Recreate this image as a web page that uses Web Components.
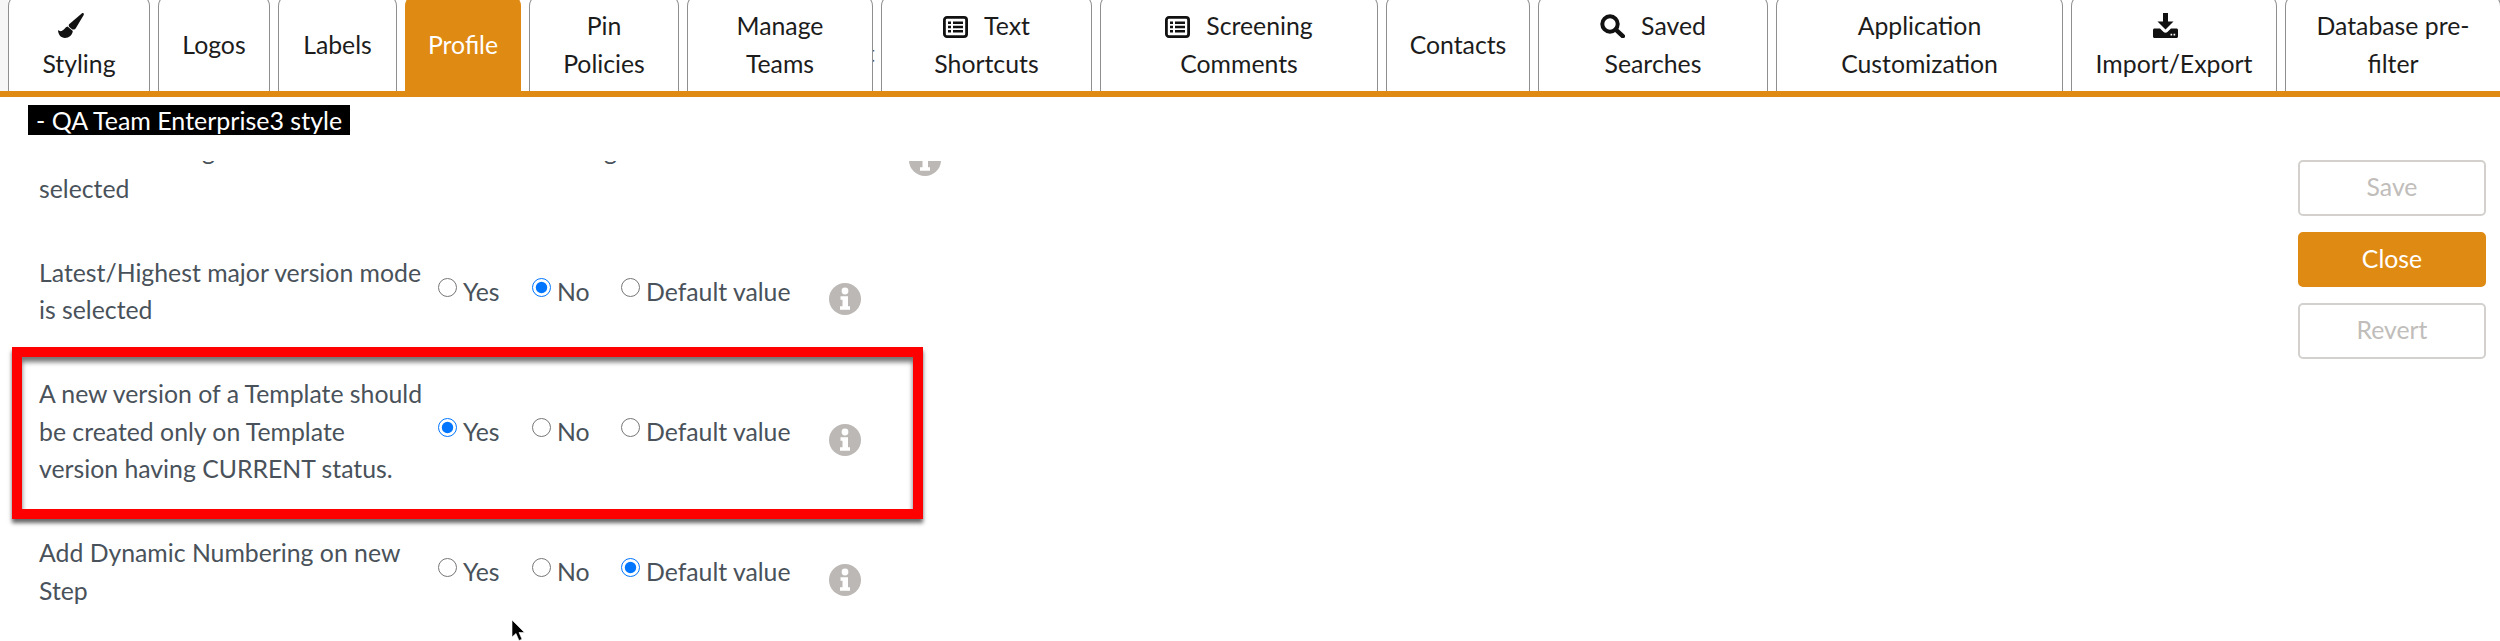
<!DOCTYPE html>
<html lang="en">
<head>
<meta charset="utf-8">
<title>Profile</title>
<style>
  html, body { margin: 0; height: 100%; background: #fff; overflow: hidden; }
  body { font-family: Lato, "Liberation Sans", sans-serif; }
</style>
</head>
<body>
<settings-page>
  <tab-bar slot="tabs">
    <nav-tab width="142"><ui-icon name="brush" block></ui-icon>Styling</nav-tab>
    <nav-tab width="112">Logos</nav-tab>
    <nav-tab width="119">Labels</nav-tab>
    <nav-tab width="116" active>Profile</nav-tab>
    <nav-tab width="150">Pin<br>Policies</nav-tab>
    <nav-tab width="186">Manage<br>Teams</nav-tab>
    <nav-tab width="211"><ui-icon name="list"></ui-icon>Text<br>Shortcuts</nav-tab>
    <nav-tab width="278"><ui-icon name="list"></ui-icon>Screening<br>Comments</nav-tab>
    <nav-tab width="144">Contacts</nav-tab>
    <nav-tab width="230"><ui-icon name="search"></ui-icon>Saved<br>Searches</nav-tab>
    <nav-tab width="287">Application<br>Customization</nav-tab>
    <nav-tab width="206"><ui-icon name="download" block></ui-icon>Import/Export</nav-tab>
    <nav-tab width="216">Database pre-<br>filter</nav-tab>
  </tab-bar>

  <span slot="badge">- QA Team Enterprise3 style</span>

  <pref-row wide>Latest minor tag and the latest draft version while tag<br>selected</pref-row>
  <pref-row group="major" value="no">Latest/Highest major version mode<br>is selected</pref-row>
  <pref-row group="current" value="yes" marked>A new version of a Template should<br>be created only on Template<br>version having CURRENT status.</pref-row>
  <pref-row group="numbering" value="default">Add Dynamic Numbering on new<br>Step</pref-row>

  <action-button slot="actions" disabled>Save</action-button>
  <action-button slot="actions" primary>Close</action-button>
  <action-button slot="actions" disabled>Revert</action-button>
</settings-page>

<script>
const ORANGE = '#df8a13';

const ICONS = {
  brush: {
    w: 26, h: 25,
    body: `<path fill="#111" d="M24 .3c1.2-.6 2.2.4 1.7 1.7L17.8 15.3c-.7 1.1-2 1.6-3.4 1.1l-2.2-1.6c-1.5-1.1-1.8-2.5-1.1-3.6z"/>
           <path fill="#111" d="M9.6 13.6l5.2 4.4C14.4 22 11 25 7 25c-4 0-7-3.6-7-8 1 .8 2.2 1.5 3.6 1.1 2.6-.7 3.4-3.9 6-4.5z"/>`
  },
  list: {
    w: 25, h: 22,
    body: `<rect x="1.4" y="1.4" width="22.2" height="19.2" rx="2.6" fill="none" stroke="#111" stroke-width="2.8"/>
           <path fill="#111" d="M5 5.4h3v2.6H5zM5 9.7h3v2.6H5zM5 14h3v2.6H5zM10 5.4h10v2.6H10zM10 9.7h10v2.6H10zM10 14h10v2.6H10z"/>`
  },
  search: {
    w: 25, h: 24,
    body: `<circle cx="10" cy="10" r="7.7" fill="none" stroke="#111" stroke-width="4"/>
           <path d="M15.8 15.6l7 6.6" fill="none" stroke="#111" stroke-width="4.4" stroke-linecap="round"/>`
  },
  download: {
    w: 25, h: 25,
    body: `<path fill="#111" d="M10 0h5v8.5h5.5L12.5 16.5 4.5 8.5H10z"/>
           <path fill="#111" fill-rule="evenodd" d="M1.5 15.5H7l3.6 3.6c1.1 1 2.7 1 3.8 0l3.6-3.6h5.5c.8 0 1.5.7 1.5 1.5v6.5c0 .8-.7 1.5-1.5 1.5h-22C.7 25 0 24.300 0 23.500V17c0-.8.7-1.500 1.500-1.500zM17.500 20.800h1.700v1.700h-1.700zM20.500 20.800h1.700v1.700h-1.700z"/>`
  }
};

class UiIcon extends HTMLElement {
  connectedCallback() {
    const icon = ICONS[this.getAttribute('name')];
    this.attachShadow({ mode: 'open' }).innerHTML = `
      <style>
        :host { display: inline-block; vertical-align: -3px; margin-right: 16px; line-height: 0; }
        /* icon on its own line keeps the trailing gap, so it sits left of centre */
        :host([block]) { display: block; margin: 0 0 1px; padding-right: 17px; height: 37px; vertical-align: baseline; }
        :host([block]) svg { margin-top: 6px; }
      </style>
      <svg width="${icon.w}" height="${icon.h}" viewBox="0 0 ${icon.w} ${icon.h}">${icon.body}</svg>`;
  }
}

class NavTab extends HTMLElement {
  connectedCallback() {
    this.style.width = this.getAttribute('width') + 'px';
    this.attachShadow({ mode: 'open' }).innerHTML = `
      <style>
        :host {
          display: flex;
          flex: none;
          box-sizing: border-box;
          flex-direction: column;
          justify-content: center;
          padding-top: 4px;
          background: #fff;
          border: 1px solid #8f8f8f;
          border-bottom: 0;
          border-radius: 12px 12px 0 0;
          text-align: center;
          position: relative;
          z-index: 1;
        }
        :host([active]) {
          background: ${ORANGE};
          border-color: ${ORANGE};
          color: #fff;
        }
      </style>
      <div><slot></slot></div>`;
  }
}

class TabBar extends HTMLElement {
  connectedCallback() {
    this.attachShadow({ mode: 'open' }).innerHTML = `
      <style>
        :host {
          display: block;
          height: 97px;
          overflow: hidden;
          box-sizing: border-box;
          border-bottom: 6px solid ${ORANGE};
          font-size: 24.800px;
          line-height: 38px;
          color: #1c1c1c;
        }
        .tabs {
          display: flex;
          gap: 8px;
          height: 97px;
          margin-top: -6px;
          border-left: 8px solid #f6f6f6;
          position: relative;
        }
        /* page text showing through the gap between two tabs */
        .behind {
          position: absolute;
          left: 858px;
          top: 40px;
          font-size: 24px;
          color: #555;
        }
      </style>
      <div class="tabs">
        <span class="behind">t</span>
        <slot></slot>
      </div>`;
  }
}

class InfoIcon extends HTMLElement {
  connectedCallback() {
    this.attachShadow({ mode: 'open' }).innerHTML = `
      <style>
        :host { display: block; width: 32px; height: 32px; line-height: 0; }
      </style>
      <svg width="32" height="32" viewBox="0 0 32 32">
        <circle cx="16" cy="16" r="16" fill="#bbb8b5"/>
        <circle cx="16" cy="8" r="3.400" fill="#fff"/>
        <path fill="#fff" d="M11.500 13.200h7.500v10h2v3.600H11v-3.600h2.500v-6.400h-2z"/>
      </svg>`;
  }
}

class PrefRow extends HTMLElement {
  connectedCallback() {
    const group = this.getAttribute('group');
    const value = this.getAttribute('value');
    const option = (val, label) => `
      <label>
        <input type="radio" name="${group}" value="${val}" ${val === value ? 'checked' : ''}>
        <span>${label}</span>
      </label>`;

    this.attachShadow({ mode: 'open' }).innerHTML = `
      <style>
        :host {
          display: flex;
          align-items: center;
          position: relative;
          padding: 23.250px 0 23.250px 39px;
          font-size: 24.800px;
          line-height: 37.500px;
          color: #49525a;
        }
        .label { width: 399px; flex: none; white-space: nowrap; }
        :host([wide]) .label { width: 870px; }
        :host([wide]) info-icon { align-self: flex-start; margin: 12px 0 0; }
        .options {
          display: grid;
          grid-template-columns: 94px 89px 208px;
          flex: none;
        }
        label { display: flex; align-items: flex-start; }
        input {
          width: 19px;
          height: 19px;
          margin: 5px 6px 0 0;
          flex: none;
        }
        info-icon { margin-top: 16px; }
        .mark {
          position: absolute;
          left: 12px;
          top: -5px;
          bottom: -8px;
          width: 911px;
          box-sizing: border-box;
          border: 10px solid #ff0000;
          box-shadow: 0 4px 4px rgba(0, 0, 0, .6), inset 0 5px 5px rgba(0, 0, 0, .55);
          pointer-events: none;
        }
      </style>
      <div class="label"><slot></slot></div>
      ${group ? `<div class="options">${option('yes', 'Yes')}${option('no', 'No')}${option('default', 'Default value')}</div>` : ''}
      <info-icon></info-icon>
      ${this.hasAttribute('marked') ? '<div class="mark"></div>' : ''}`;
  }
}

class ActionButton extends HTMLElement {
  connectedCallback() {
    this.attachShadow({ mode: 'open' }).innerHTML = `
      <style>
        :host {
          display: flex;
          align-items: center;
          justify-content: center;
          box-sizing: border-box;
          height: 56px;
          padding-bottom: 3px;
          border: 2px solid #d3d0cd;
          border-radius: 5px;
          font-size: 24.800px;
          color: #c0bdba;
          background: #fff;
        }
        :host([primary]) {
          height: 55px;
          background: ${ORANGE};
          border-color: ${ORANGE};
          color: #fff;
        }
      </style>
      <slot></slot>`;
  }
}

class SettingsPage extends HTMLElement {
  connectedCallback() {
    this.attachShadow({ mode: 'open' }).innerHTML = `
      <style>
        :host {
          display: flex;
          flex-direction: column;
          height: 641px;
          position: relative;
          overflow: hidden;
        }
        .main { display: flex; flex: 1; min-height: 0; }
        .left { flex: 1; display: flex; flex-direction: column; min-width: 0; }
        .badge-line { padding: 8px 0 0 28px; height: 64px; box-sizing: border-box; flex: none; }
        ::slotted([slot="badge"]) {
          display: inline-block;
          background: #000;
          color: #fff;
          font-size: 25px;
          line-height: 30px;
          padding: 0 8px;
        }
        .scroller { flex: 1; overflow: hidden; }
        .rows { margin-top: -52px; }
        .actions {
          flex: none;
          width: 188px;
          margin: 63px 14px 0 0;
          display: flex;
          flex-direction: column;
          gap: 16px;
        }
        .cursor { position: absolute; left: 511px; top: 620px; }
      </style>
      <slot name="tabs"></slot>
      <div class="main">
        <div class="left">
          <div class="badge-line"><slot name="badge"></slot></div>
          <div class="scroller"><div class="rows"><slot></slot></div></div>
        </div>
        <div class="actions"><slot name="actions"></slot></div>
      </div>
      <svg class="cursor" width="17" height="24" viewBox="0 0 17 24">
        <path d="M1 0v17l4-3.500 3 7 3-1.300-3-6.700h5.500z" fill="#000" stroke="#fff" stroke-width=".6"/>
      </svg>`;
  }
}

customElements.define('ui-icon', UiIcon);
customElements.define('nav-tab', NavTab);
customElements.define('tab-bar', TabBar);
customElements.define('info-icon', InfoIcon);
customElements.define('pref-row', PrefRow);
customElements.define('action-button', ActionButton);
customElements.define('settings-page', SettingsPage);
</script>
</body>
</html>
